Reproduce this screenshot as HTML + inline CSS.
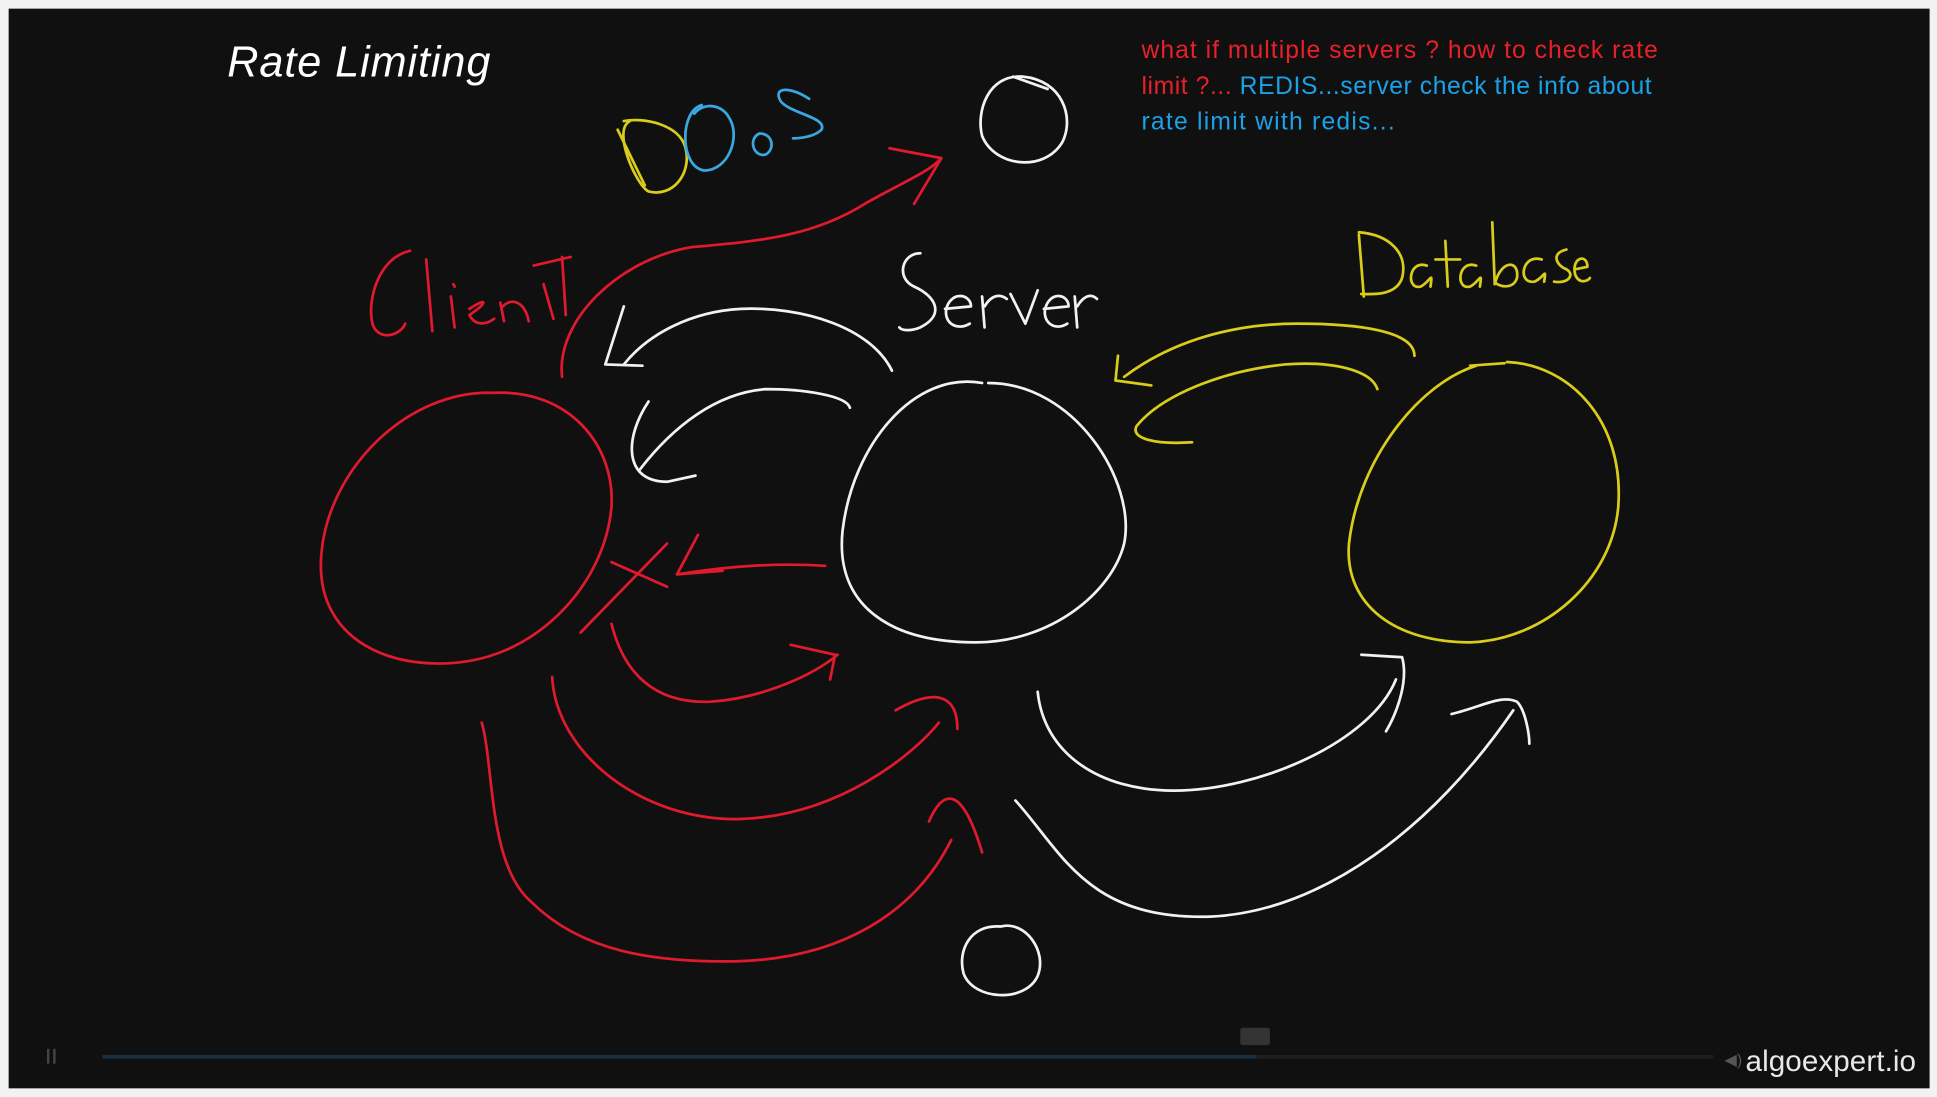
<!DOCTYPE html>
<html><head><meta charset="utf-8"><style>
html,body{margin:0;padding:0;background:#fff;width:1937px;height:1097px;overflow:hidden}
svg{display:block}
</style></head><body>
<svg width="1937" height="1097" viewBox="0 0 1568 888" xmlns="http://www.w3.org/2000/svg">
<rect x="0" y="0" width="1568" height="888" fill="#f2f2f2"/>
<rect x="7" y="7" width="1555" height="874" fill="#101010"/>
<text x="184" y="62" font-family="Liberation Sans, sans-serif" font-style="italic" font-size="35" fill="#fff" textLength="213">Rate Limiting</text>
<g font-family="Liberation Sans, sans-serif" font-size="20">
<text x="924" y="47" fill="#e8202a" textLength="418">what if multiple servers ? how to check rate</text>
<text x="924" y="76" fill="#e8202a" textLength="413">limit ?... <tspan fill="#1ba1e6">REDIS...server check the info about</tspan></text>
<text x="924" y="105" fill="#1ba1e6" textLength="205">rate limit with redis...</text>
</g>
<g fill="none" stroke-width="2.2" stroke-linecap="round" stroke-linejoin="round">
<g stroke="#e01a2e">
<path d="M332 203 C300 210 295 260 305 268 C312 275 325 270 328 262"/>
<path d="M345 210 L350 268"/>
<path d="M365 240 L368 265 M367 230 L368 232"/>
<path d="M380 250 C395 240 395 245 380 255 C385 265 395 262 400 258"/>
<path d="M405 245 L408 260 M407 248 C415 240 425 245 428 260"/>
<path d="M440 230 L448 258 M432 215 L462 208 M455 208 L458 255"/>
<path d="M400 318 C330 315 265 380 260 450 C255 520 320 545 380 535 C440 525 490 470 495 410 C498 360 460 315 400 318"/>
<path d="M455 305 C450 260 500 210 560 200 C620 195 660 190 700 165 C730 148 750 140 760 130 M720 120 L762 128 L740 165"/>
<path d="M470 512 L540 440"/>
<path d="M495 455 L540 475"/>
<path d="M668 458 C620 455 580 460 548 465 L565 433 M548 465 L585 462"/>
<path d="M495 505 C505 545 530 570 575 568 C620 565 660 545 678 530 M640 522 L676 530 L672 550"/>
<path d="M447 548 C450 610 520 665 600 663 C680 660 740 610 760 585 M725 575 C760 555 775 565 775 590"/>
<path d="M390 585 C400 620 395 700 430 730 C470 770 530 780 600 778 C680 775 740 740 770 680 M752 665 C765 635 780 640 795 690"/>
</g>
<g stroke="#d9cc1a">
<path d="M510 98 C495 105 515 150 525 155 C545 160 560 140 555 120 C550 100 520 95 505 98 M500 105 L522 150"/>
<path d="M1100 190 L1104 240 M1100 188 C1125 190 1140 205 1135 225 C1130 240 1110 238 1102 238"/>
<path d="M1155 215 C1140 210 1138 235 1150 232 C1158 228 1160 218 1158 232"/>
<path d="M1170 195 L1172 232 M1162 210 L1182 210"/>
<path d="M1195 215 C1180 210 1178 235 1190 232 C1198 228 1200 218 1198 232"/>
<path d="M1208 180 L1210 230 C1215 210 1230 210 1228 225 C1225 235 1212 232 1210 228"/>
<path d="M1248 210 C1232 205 1228 230 1242 228 C1250 225 1252 215 1250 228"/>
<path d="M1268 202 C1255 205 1260 215 1268 218 C1275 222 1270 230 1258 228"/>
<path d="M1275 218 L1285 216 C1285 205 1272 208 1275 222 C1278 230 1285 228 1287 225"/>
<path d="M1145 288 C1145 268 1100 262 1050 262 C1000 262 950 275 910 305 M905 288 L903 308 L932 312"/>
<path d="M1115 315 C1110 300 1080 292 1040 295 C990 300 940 320 920 345 C915 355 935 360 965 358"/>
<path d="M1195 296 C1150 310 1100 370 1092 440 C1088 490 1130 520 1190 520 C1250 518 1305 470 1310 410 C1315 340 1270 295 1220 293 M1190 296 L1218 294"/>
</g>
<g stroke="#3aa8e0">
<path d="M568 85 C550 90 550 135 570 138 C590 138 600 110 590 95 C585 85 570 82 562 92"/>
<path d="M615 108 C605 112 610 128 620 125 C628 120 625 108 615 108"/>
<path d="M655 80 C640 70 625 70 632 82 C640 92 670 95 665 105 C660 110 650 112 642 112"/>
</g>
<g stroke="#f2f2f2">
<path d="M828 62 C800 60 790 90 795 110 C805 135 845 140 860 115 C870 95 860 65 828 62 M820 62 L848 72"/>
<path d="M745 205 C730 205 725 225 740 232 C758 240 765 255 745 265 C738 268 730 268 728 265"/>
<path d="M765 250 L786 248 C786 238 770 235 766 250 C764 262 775 268 785 262"/>
<path d="M795 240 L797 265 M797 248 C803 238 810 238 815 242"/>
<path d="M818 238 L830 262 L840 235"/>
<path d="M845 250 L865 248 C865 238 850 235 846 250 C844 262 855 268 864 262"/>
<path d="M870 240 L872 265 M872 248 C878 238 884 238 888 242"/>
<path d="M722 300 C705 265 650 248 600 250 C560 252 525 270 505 295 M505 248 L490 295 L520 296"/>
<path d="M688 330 C685 320 650 315 620 315 C580 318 545 345 518 380 M525 325 C505 355 505 390 540 390 L563 385"/>
<path d="M795 310 C740 300 690 360 682 430 C676 490 720 520 790 520 C850 520 900 480 910 440 C920 390 870 310 800 310"/>
<path d="M840 560 C845 610 890 640 950 640 C1020 640 1110 600 1130 550 M1102 530 L1135 532 C1140 550 1132 575 1122 592"/>
<path d="M822 648 C860 690 880 745 980 742 C1070 738 1160 670 1225 575 M1175 578 C1200 572 1215 562 1228 568 C1235 575 1238 595 1238 602"/>
<path d="M810 750 C785 748 775 770 780 788 C788 810 830 812 840 790 C848 770 830 745 810 750"/>
</g>
</g>
<rect x="38" y="849" width="2" height="12" fill="#444"/><rect x="43" y="849" width="2" height="12" fill="#444"/>
<rect x="83" y="854" width="934" height="3" fill="#1a3040"/>
<rect x="1017" y="854" width="370" height="3" fill="#1e1e1e"/>
<rect x="1004" y="832" width="24" height="14" rx="2" fill="#333"/>
<text x="1396" y="862" font-family="Liberation Sans, sans-serif" font-size="13" fill="#555">◀)</text>
<text x="1413" y="867" font-family="Liberation Sans, sans-serif" font-size="24" fill="#e8e8e8" textLength="138">algoexpert.io</text>
</svg>
</body></html>
